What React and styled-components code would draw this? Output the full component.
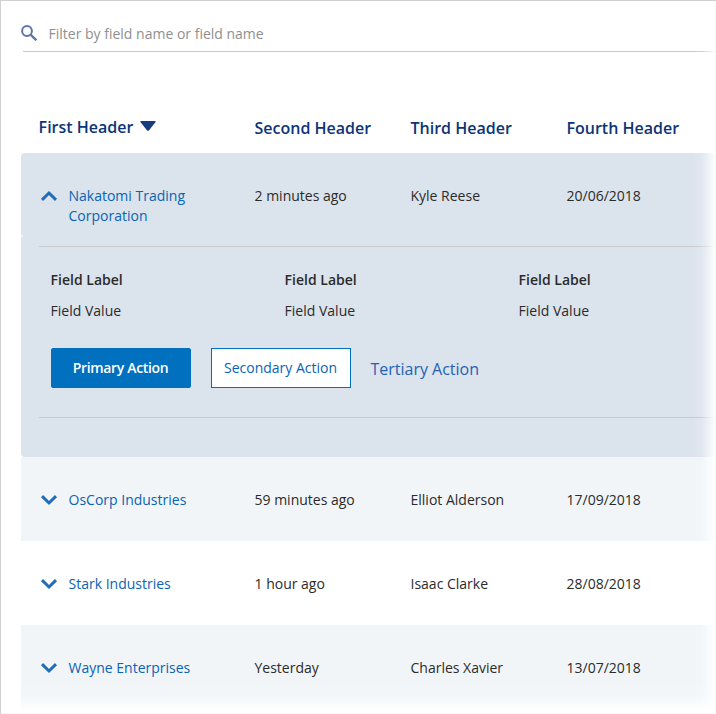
import React from "react";
import styled, { createGlobalStyle, css } from "styled-components";

const GlobalStyle = createGlobalStyle`
  * { box-sizing: border-box; }
  body { margin: 0; background: #fff; overflow: hidden; }
`;

const Frame = styled.main`
  position: relative;
  width: 716px;
  height: 714px;
  overflow: hidden;
  border-left: 1px solid #d0d0d0;
  border-top: 1px solid #d0d0d0;
  background: #fff;
  color: #2b2b2b;
  font: 14px/20px "Open Sans", sans-serif;
`;

const RightFade = styled.div`
  position: absolute;
  top: -1px;
  right: 0;
  bottom: 0;
  width: 24px;
  background: linear-gradient(to right, rgba(255, 255, 255, 0), rgba(255, 255, 255, 0.15) 40%, rgba(255, 255, 255, 0.85) 90%, #fff);
`;

const BottomFade = styled.div`
  position: absolute;
  left: -1px;
  right: 0;
  bottom: 0;
  height: 34px;
  background: linear-gradient(to bottom, rgba(255, 255, 255, 0), rgba(255, 255, 255, 0.15) 45%, rgba(255, 255, 255, 0.9) 90%, #fff);
`;

const FrameEdge = styled.div`
  position: absolute;
  left: -1px;
  top: 0;
  right: 0;
  bottom: 0;
  border-right: 1px solid #f8f8f8;
  border-bottom: 1px solid #f8f8f8;
`;

const SearchBar = styled.label`
  display: flex;
  align-items: center;
  height: 35px;
  margin: 16px 0 0 22px;
  border-bottom: 1px solid #c8c8c8;
`;

const SearchIcon = styled.svg`
  flex: none;
  width: 16px;
  height: 16px;
  margin: -2px 0 0 -2px;
`;

const SearchInput = styled.input`
  width: 400px;
  height: 24px;
  margin: 0 0 2px 11.5px;
  padding: 0;
  border: 0;
  outline: 0;
  background: none;
  font: inherit;
  &::placeholder { color: #8f8f8f; opacity: 1; }
`;

const Table = styled.section`
  width: 695px;
  margin-left: 20px;
`;

const columns = css`
  display: grid;
  grid-template-columns: 215.5px 156px 156px 149.5px;
  padding-left: 18px;
`;

const HeaderRow = styled.div`
  ${columns}
  height: 101px;
  padding-top: 65px;
  color: #0b3577;
  font-size: 16px;
  font-weight: 600;
  line-height: 20px;
`;

const HeaderCell = styled.div`
  display: flex;
  align-items: flex-start;
  margin-left: ${({ $sorted }) => ($sorted ? -0.4 : 0)}px;
  padding-top: ${({ $sorted }) => ($sorted ? 0 : 1)}px;
`;

const SortArrow = styled.svg`
  width: 16px;
  height: 11px;
  margin: 4px 0 0 6.4px;
`;

const Row = styled.div`
  ${columns}
  height: ${({ $open }) => ($open ? 83 : 84)}px;
  padding-top: 33px;
  border-radius: ${({ $open }) => ($open ? "4px 4px 3px 3px" : "0")};
  background: ${({ $tone }) => $tone};
`;

const NameCell = styled.div`
  display: flex;
  align-items: flex-start;
  padding-right: 60px;
`;

const RowLink = styled.a`
  color: #0963b4;
`;

const Chevron = styled.svg`
  flex: none;
  width: 18px;
  height: 12px;
  margin: 4px 10.5px 0 1px;
  transform: ${({ $open }) => ($open ? "rotate(180deg)" : "none")};
`;

const Details = styled.div`
  height: 221px;
  padding: 10px 0 0 18px;
  border-radius: 2px 2px 4px 4px;
  background: #dbe3ec;
`;

const DetailsBody = styled.div`
  height: 172px;
  padding: 23px 0 0 12px;
  border-top: 1px solid #cacbcd;
  border-bottom: 1px solid #c5c9cf;
`;

const Fields = styled.dl`
  display: grid;
  grid-template-columns: repeat(3, 234px);
  margin: 0 0 0 -0.4px;
`;

const FieldLabel = styled.dt`
  font-weight: 600;
`;

const FieldValue = styled.dd`
  margin: 11px 0 0;
`;

const Actions = styled.div`
  display: flex;
  gap: 20px;
  margin-top: 27px;
`;

const Button = styled.button`
  width: 140px;
  height: 40px;
  padding: 0 1px 0 0;
  border: 1px solid #0070bf;
  border-radius: ${({ $primary }) => ($primary ? 2 : 0)}px;
  background: ${({ $primary }) => ($primary ? "#0070bf" : "#fff")};
  color: ${({ $primary }) => ($primary ? "#fff" : "#0963b4")};
  font: inherit;
  font-weight: ${({ $primary }) => ($primary ? 600 : 400)};
  letter-spacing: ${({ $primary }) => ($primary ? "-0.33px" : "normal")};
`;

const TextButton = styled.button`
  height: 40px;
  margin-left: -0.6px;
  padding: 2px 0 0;
  border: 0;
  background: none;
  color: #2462b5;
  font: 16px/20px "Open Sans", sans-serif;
`;

const rows = [
  { name: "Nakatomi Trading Corporation", time: "2 minutes ago", person: "Kyle Reese", date: "20/06/2018", open: true, tone: "#dbe3ec" },
  { name: "OsCorp Industries", time: "59 minutes ago", person: "Elliot Alderson", date: "17/09/2018", tone: "#f1f5f8" },
  { name: "Stark Industries", time: "1 hour ago", person: "Isaac Clarke", date: "28/08/2018", tone: "#fff" },
  { name: "Wayne Enterprises", time: "Yesterday", person: "Charles Xavier", date: "13/07/2018", tone: "#f1f5f8" },
];

function RowDetails() {
  return (
    <Details>
      <DetailsBody>
        <Fields>
          {[0, 1, 2].map((i) => (
            <div key={i}>
              <FieldLabel>Field Label</FieldLabel>
              <FieldValue>Field Value</FieldValue>
            </div>
          ))}
        </Fields>
        <Actions>
          <Button $primary>Primary Action</Button>
          <Button>Secondary Action</Button>
          <TextButton>Tertiary Action</TextButton>
        </Actions>
      </DetailsBody>
    </Details>
  );
}

export default function App() {
  return (
    <>
      <GlobalStyle />
      <Frame>
        <SearchBar>
          <SearchIcon viewBox="0 0 16 16" fill="none" stroke="#5d76a9">
            <circle cx="6" cy="6" r="4.9" strokeWidth="2" />
            <path d="M9.6 9.6L15.3 15.3" strokeWidth="2.3" />
          </SearchIcon>
          <SearchInput placeholder="Filter by field name or field name" />
        </SearchBar>
        <Table>
          <HeaderRow>
            <HeaderCell $sorted>
              First Header
              <SortArrow viewBox="0 0 16 11">
                <path d="M1.2 0H14.8Q16.3 0 15.4 1.2L9.1 9.2Q8 10.5 6.9 9.2L0.6 1.2Q-0.3 0 1.2 0Z" fill="#173b80" />
              </SortArrow>
            </HeaderCell>
            <HeaderCell>Second Header</HeaderCell>
            <HeaderCell>Third Header</HeaderCell>
            <HeaderCell>Fourth Header</HeaderCell>
          </HeaderRow>
          {rows.map((row) => (
            <React.Fragment key={row.name}>
              <Row $open={row.open} $tone={row.tone}>
                <NameCell>
                  <Chevron $open={row.open} viewBox="0 0 18 12">
                    <path d="M2 2.2L9 9L16 2.2" fill="none" stroke="#206db9" strokeWidth="3" />
                  </Chevron>
                  <RowLink>{row.name}</RowLink>
                </NameCell>
                <div>{row.time}</div>
                <div>{row.person}</div>
                <div>{row.date}</div>
              </Row>
              {row.open && <RowDetails />}
            </React.Fragment>
          ))}
        </Table>
        <RightFade />
        <BottomFade />
        <FrameEdge />
      </Frame>
    </>
  );
}
